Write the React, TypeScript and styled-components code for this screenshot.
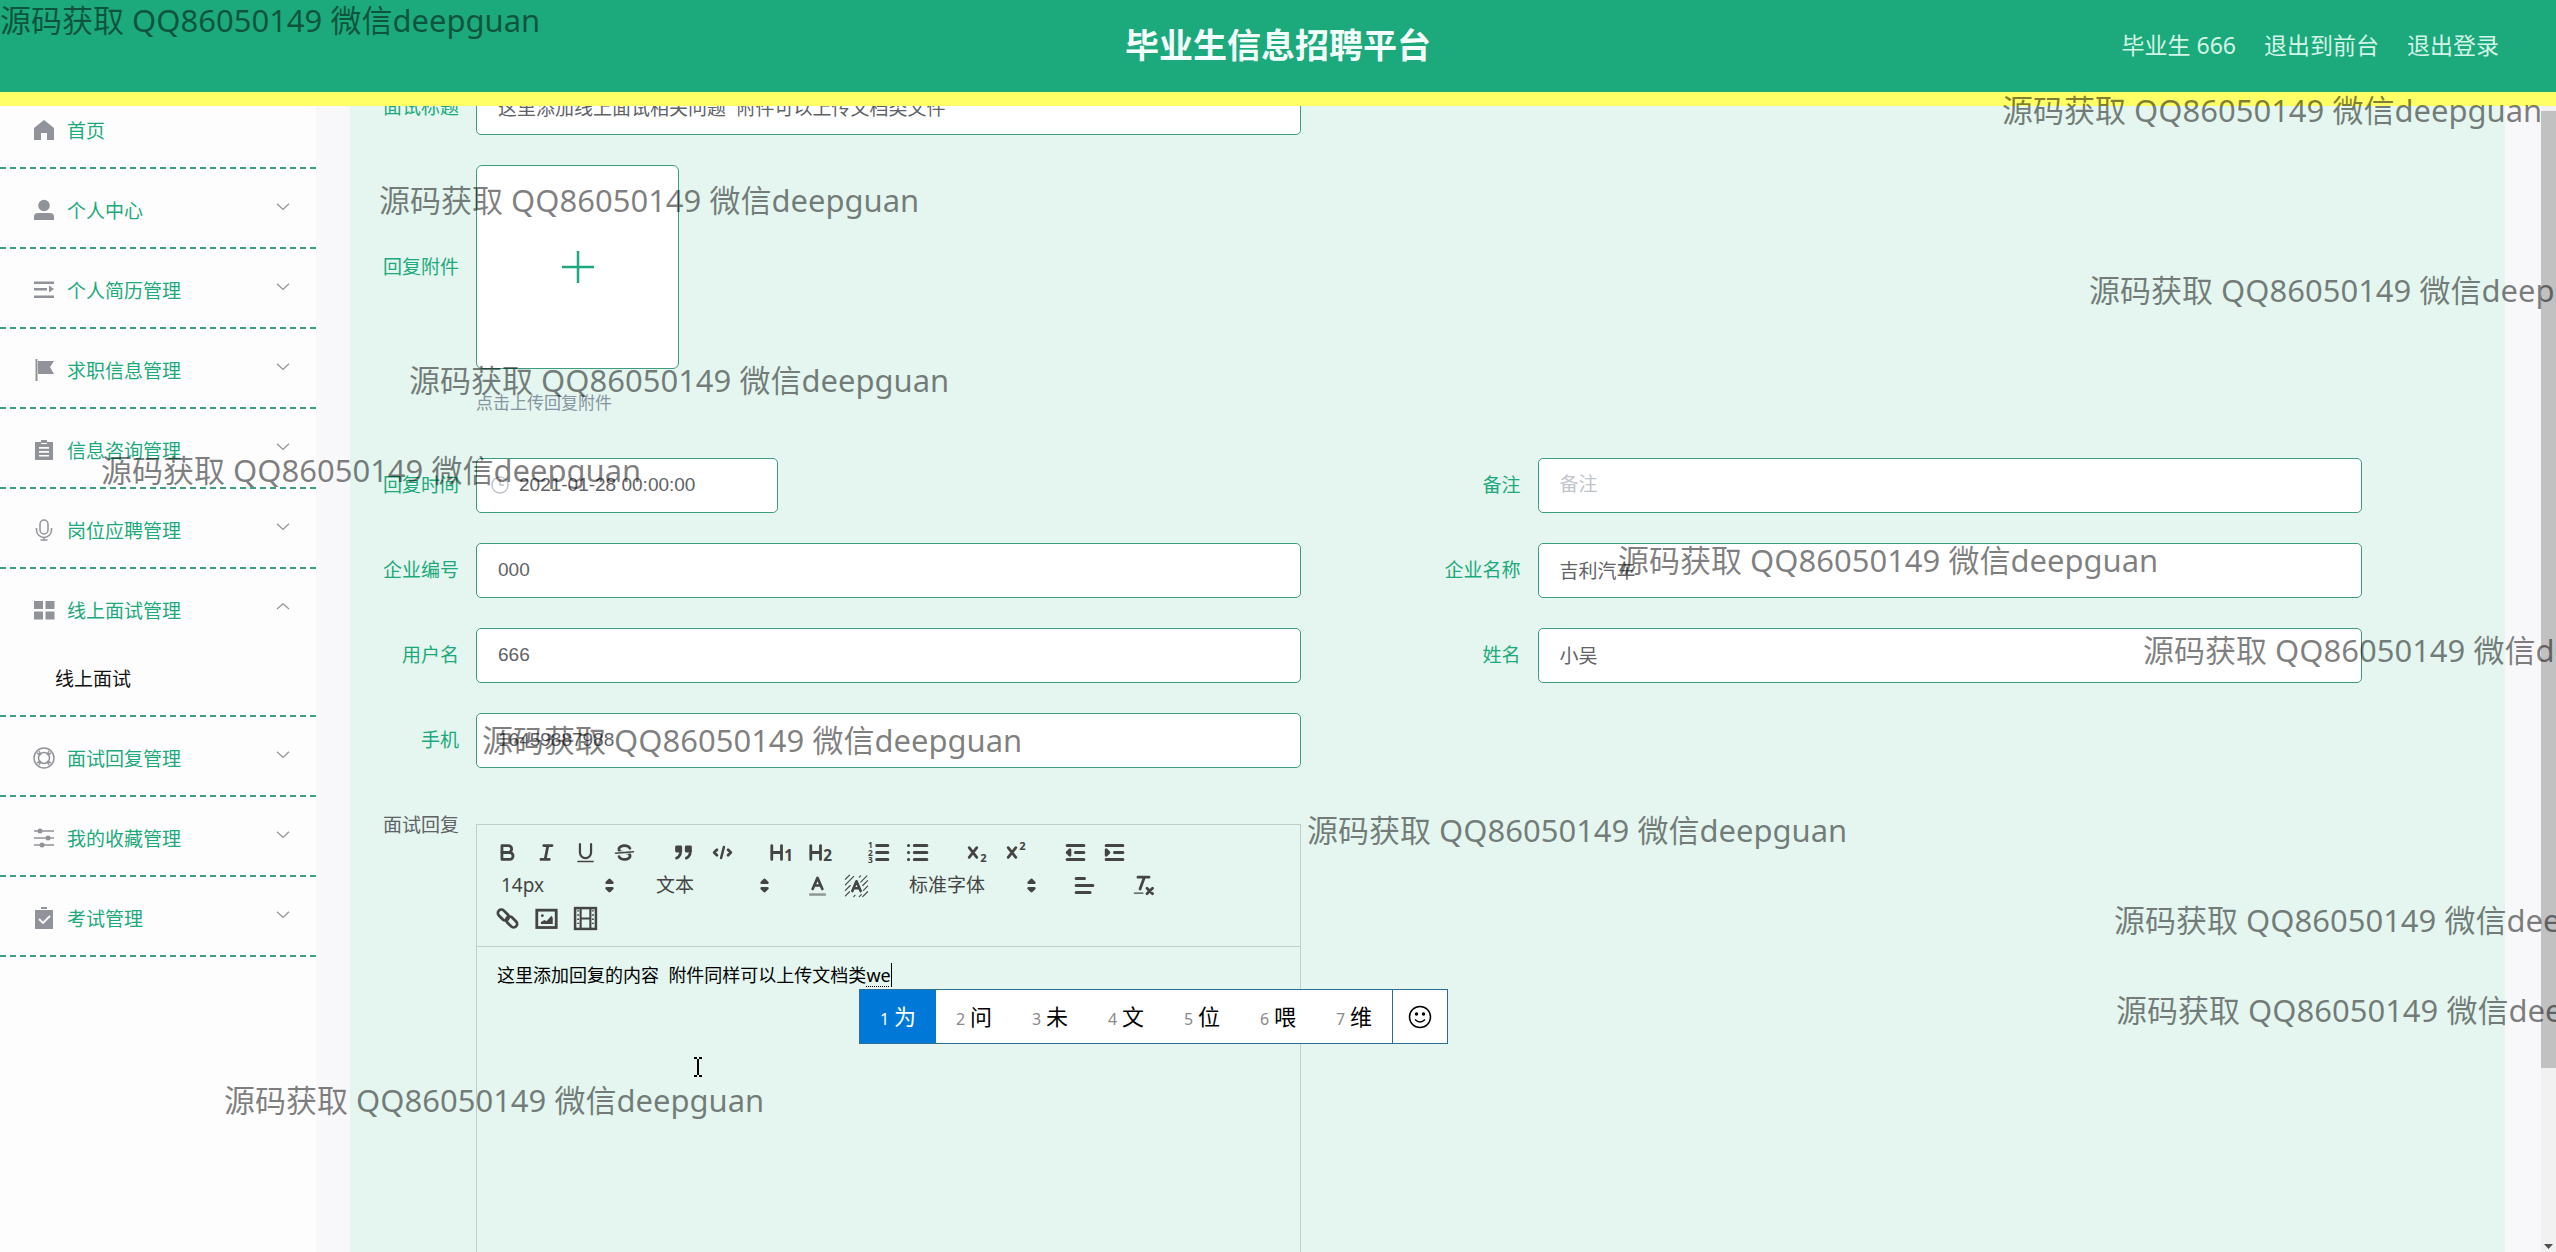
import React from "react";
import styled, { createGlobalStyle } from "styled-components";

const green = "#1ca97b";
const fieldBorder = "#3f9c7e";
const panelBg = "#e4f6ef";
const editorLine = "#bccfc8";

const Global = createGlobalStyle`
  *, *::before, *::after { box-sizing: border-box; }
  html, body, #root { height: 100%; }
  body {
    margin: 0;
    overflow: hidden;
    font-family: "Noto Sans", "Noto Sans CJK SC", sans-serif;
    font-size: 19px;
    background: #f8f8fb;
  }
  button, input, select { font: inherit; color: inherit; margin: 0; }
  ul { list-style: none; margin: 0; padding: 0; }
`;

const Page = styled.div`
  position: relative;
  height: 100vh;
  display: flex;
  flex-direction: column;
  overflow: hidden;
`;

const Header = styled.header`
  flex: none;
  height: 106px;
  display: grid;
  grid-template-columns: 1fr auto 1fr;
  align-items: center;
  padding-bottom: 3px;
  background: ${green};
  border-bottom: 14px solid #ffff66;
`;

const Title = styled.h1`
  grid-column: 2;
  margin: 0;
  font-size: 34px;
  line-height: 48px;
  font-weight: 700;
  color: #f4fffb;
`;

const HeaderNav = styled.nav`
  display: flex;
  justify-content: flex-end;
  gap: 28px;
  padding-right: 57px;
  font-size: 23px;
  line-height: 32px;
  color: #d3f5e8;
`;

const HeaderLink = styled.a`
  color: inherit;
  text-decoration: none;
`;

const Body = styled.div`
  flex: 1;
  min-height: 0;
  display: flex;
`;

const Sidebar = styled.aside`
  flex: none;
  width: 316px;
  overflow: hidden;
  background: #fdfdfd;
`;

const Menu = styled.ul`
  margin-top: -17px;
`;

const MenuItem = styled.li`
  border-bottom: 2px dashed #3d9f7e;
`;

const MenuButton = styled.button`
  width: 100%;
  height: 78px;
  display: flex;
  align-items: center;
  gap: 12px;
  padding: 3px 26px 0 33px;
  border: 0;
  background: none;
  color: ${green};
  text-align: left;
  svg { flex: none; color: #909399; }
`;

const MenuText = styled.span`
  flex: 1;
`;

const SubLink = styled.a`
  display: flex;
  align-items: center;
  height: 68px;
  padding: 0 0 6px 55px;
  color: #111;
  text-decoration: none;
`;

const Main = styled.main`
  flex: 1;
  min-width: 0;
  padding: 0 36px 0 34px;
  overflow: hidden;
`;

const Panel = styled.form`
  min-height: 100%;
  padding: 0 16px;
  background: ${panelBg};
`;

const FormGrid = styled.div`
  display: grid;
  grid-template-columns: 1fr 1fr;
  row-gap: 30px;
  margin-top: -26px;
`;

const Item = styled.div<{ $start?: boolean }>`
  display: flex;
  align-items: flex-start;
  padding-right: 127px;
  grid-column: ${(p) => (p.$start ? "1" : "auto")};
`;

const Label = styled.label<{ $tall?: boolean; $muted?: boolean }>`
  flex: none;
  width: 110px;
  padding-right: 17px;
  text-align: right;
  line-height: ${(p) => (p.$tall ? "204px" : "55px")};
  color: ${(p) => (p.$muted ? "#606266" : green)};
`;

const Control = styled.div`
  flex: 1;
  min-width: 0;
`;

const Input = styled.input`
  display: block;
  width: 100%;
  height: 55px;
  padding: 0 21px 2px;
  border: 1px solid ${fieldBorder};
  border-radius: 5px;
  background: #fff;
  color: #606266;
  font-family: "Liberation Sans", "Noto Sans CJK SC", sans-serif;
  outline: none;
  &::placeholder { color: #c0c4cc; }
`;

const DateBox = styled.div`
  display: flex;
  align-items: center;
  gap: 10px;
  width: 302px;
  height: 55px;
  padding: 0 14px 2px;
  border: 1px solid ${fieldBorder};
  border-radius: 5px;
  background: #fff;
  color: #c0c4cc;
`;

const DateInput = styled.input`
  flex: 1;
  min-width: 0;
  padding: 0;
  border: 0;
  background: none;
  color: #606266;
  font-family: "Liberation Sans", sans-serif;
  outline: none;
`;

const UploadButton = styled.button`
  display: flex;
  align-items: center;
  justify-content: center;
  width: 203px;
  height: 204px;
  border: 1px solid ${fieldBorder};
  border-radius: 6px;
  background: #fff;
  color: ${green};
`;

const Tip = styled.p`
  margin: 24px 0 15px;
  font-size: 17px;
  line-height: 20px;
  color: #8594a0;
`;

const Editor = styled.div`
  position: relative;
  margin-top: 26px;
  border: 1px solid ${editorLine};
`;

const Toolbar = styled.div`
  padding: 11px;
  border-bottom: 1px solid ${editorLine};
  color: #444;
`;

const ToolRow = styled.div`
  display: flex;
  gap: 20px;
  height: 33px;
`;

const ToolGroup = styled.div`
  display: flex;
`;

const Tool = styled.button`
  display: flex;
  align-items: center;
  justify-content: center;
  width: 39px;
  height: 33px;
  padding: 0;
  border: 0;
  background: none;
  svg { width: 25px; height: 25px; }
`;

const Picker = styled.span<{ $width: number }>`
  display: flex;
  align-items: center;
  width: ${(p) => p.$width}px;
  padding: 0 1px 0 13px;
  svg { flex: none; width: 25px; height: 25px; pointer-events: none; }
`;

const PickerSelect = styled.select`
  flex: 1;
  min-width: 0;
  padding: 0 0 2px;
  border: 0;
  appearance: none;
  background: none;
  line-height: 28px;
  outline: none;
`;

const Content = styled.div`
  min-height: 420px;
  padding: 14px 20px;
  font-size: 18px;
  line-height: 28px;
  color: #000;
  white-space: pre-wrap;
  outline: none;
`;

const Composing = styled.span`
  border-right: 1px solid #000;
  text-decoration: underline dotted 1px;
  text-underline-offset: 4px;
`;

const Candidates = styled.div`
  position: absolute;
  z-index: 2;
  left: 382px;
  top: 164px;
  display: flex;
  height: 55px;
  border: 1px solid #2b6f92;
  background: #fff;
`;

const Candidate = styled.button<{ $active?: boolean }>`
  display: flex;
  align-items: baseline;
  justify-content: center;
  gap: 5px;
  width: 76px;
  padding: 10px 0 0;
  border: 0;
  background: ${(p) => (p.$active ? "#0078d7" : "#fff")};
  color: ${(p) => (p.$active ? "#fff" : "#000")};
  font-size: 22px;
  line-height: 32px;
  small { font-size: 16px; color: ${(p) => (p.$active ? "#fff" : "#8a8a8a")}; }
`;

const EmojiButton = styled.button`
  display: flex;
  align-items: center;
  justify-content: center;
  width: 55px;
  border: 0;
  border-left: 1px solid #2b6f92;
  background: #fff;
  color: #000;
`;

const Pointer = styled.svg`
  position: absolute;
  left: 216px;
  top: 232px;
`;

const ScrollTrack = styled.div`
  flex: none;
  width: 15px;
  display: flex;
  flex-direction: column;
  justify-content: space-between;
  align-items: center;
  padding: 5px 0 2px;
  background: #f1f1f1;
`;

const ScrollThumb = styled.div`
  width: 100%;
  height: 84%;
  background: #c1c1c1;
`;

const MarkLayer = styled.div`
  position: absolute;
  inset: 0;
  z-index: 5;
  overflow: hidden;
  pointer-events: none;
`;

const Mark = styled.span`
  position: absolute;
  font-size: 31px;
  line-height: 40px;
  white-space: nowrap;
  color: rgba(0, 0, 0, 0.5);
`;

const marks = [
  [0, 0], [2002, 90], [379, 180], [2089, 270], [409, 360], [101, 450], [1618, 540],
  [2143, 630], [482, 720], [1307, 810], [2114, 900], [2116, 990], [224, 1080],
];

/* Sidebar icons, 22px box */
const SideIcon = ({ children }: { children: React.ReactNode }) => (
  <svg width="22" height="22" viewBox="0 0 22 22" fill="currentColor" aria-hidden="true">{children}</svg>
);

const sideIcons: Record<string, React.ReactNode> = {
  home: <path d="M11 1 21 9v12h-7v-7H8v7H1V9z" />,
  user: <><circle cx="11" cy="6.5" r="5.8" /><path d="M1 21v-3q0-4 4-4h12q4 0 4 4v3z" /></>,
  fold: <><path d="M1 2.500h20v2.500H1zM1 9h13v2.500H1zM1 16.500h20V19H1z" /><path d="M16 6.500 21 10l-5 3.500z" /></>,
  flag: <><path d="M2.500 0h2v22h-2z" /><path d="M5 2h16l-4 6 4 7H5z" /></>,
  order: <path fillRule="evenodd" d="M8 1h6v2h6v18H2V3h6zM6 8v1.700h10V8zm0 4v1.700h10V12zm0 4v1.500h10V16zM8 4v1h6V4z" />,
  mic: <g fill="none" stroke="currentColor" strokeWidth="1.500"><rect x="7" y="1" width="8" height="14" rx="4" /><path d="M3.500 9v2a7.500 7.500 0 0 0 15 0V9M11 18.500V21M7.500 21h7" /></g>,
  grid: <path d="M1 2h9v8H1zM12.500 2h9v8h-9zM1 12.500h9v8H1zM12.500 12.500h9v8h-9z" />,
  help: <g fill="none" stroke="currentColor" strokeWidth="1.500"><circle cx="11" cy="11" r="10" /><circle cx="11" cy="11" r="5.500" /><path d="m4 6 3.500 2M6 4l2 3.500M18 6l-3.500 2M16 4l-2 3.500M4 16l3.500-2M6 18l2-3.500M18 16l-3.500-2M16 18l-2-3.500" /></g>,
  sliders: <><path d="M1 3.200h20v1.600H1zM1 10.200h20v1.600H1zM1 17.200h20v1.600H1z" /><circle cx="7" cy="4" r="2.500" /><circle cx="15" cy="11" r="2.500" /><circle cx="9" cy="18" r="2.500" /></>,
  check: <><path d="M8 0h6v2H8zM2 3h18v19H2z" /><path d="m6 12 4 4 7-7" fill="none" stroke="#fff" strokeWidth="1.800" /></>,
};

const Chevron = ({ up }: { up?: boolean }) => (
  <svg width="14" height="14" viewBox="0 0 14 14" fill="none" stroke="currentColor" strokeWidth="1.200" aria-hidden="true">
    {up ? <path d="M1 6 7 0.800 13 6" /> : <path d="M1 0.800 7 6.500 13 0.800" />}
  </svg>
);

const menu = [
  { icon: "home", text: "首页" },
  { icon: "user", text: "个人中心", arrow: true },
  { icon: "fold", text: "个人简历管理", arrow: true },
  { icon: "flag", text: "求职信息管理", arrow: true },
  { icon: "order", text: "信息咨询管理", arrow: true },
  { icon: "mic", text: "岗位应聘管理", arrow: true },
  { icon: "grid", text: "线上面试管理", arrow: true, child: "线上面试" },
  { icon: "help", text: "面试回复管理", arrow: true },
  { icon: "sliders", text: "我的收藏管理", arrow: true },
  { icon: "check", text: "考试管理", arrow: true },
];

/* Editor toolbar icons, 18-unit box */
const ToolIcon = ({ children }: { children: React.ReactNode }) => (
  <svg viewBox="0 0 18 18" fill="none" stroke="currentColor" strokeWidth="2" strokeLinecap="round" strokeLinejoin="round" aria-hidden="true">
    {children}
  </svg>
);
const glyph = { fill: "currentColor", stroke: "none", fontFamily: "Open Sans, sans-serif", fontWeight: 700 };

const tools: Record<string, React.ReactNode> = {
  bold: <><path d="M5,4H9.500A2.500,2.500,0,0,1,12,6.500v0A2.500,2.500,0,0,1,9.500,9H5V4Z" /><path d="M5,9h5.500A2.500,2.500,0,0,1,13,11.500v0A2.500,2.500,0,0,1,10.500,14H5V9Z" /></>,
  italic: <path d="M7 4h6M5 14h6M8 14l2-10" />,
  underline: <><path d="M5,3V9a4,4,0,0,0,8,0V3" strokeWidth="1.600" /><path d="M3.500 15.500h11" strokeWidth="1" /></>,
  strike: <><path d="M15.500 8.500l-13 1" strokeWidth="1" /><g fill="currentColor" stroke="none"><path d="M9.007,8C6.542,7.791,6,7.519,6,6.500,6,5.792,7.283,5,9,5c1.571,0,2.765.679,2.969,1.309a1,1,0,0,0,1.900-.617C13.356,4.106,11.354,3,9,3,6.200,3,4,4.538,4,6.500a3.200,3.200,0,0,0,.5,1.843Z" /><path d="M8.984,10C11.457,10.208,12,10.479,12,11.500c0,0.708-1.283,1.500-3,1.500-1.571,0-2.765-.679-2.969-1.309a1,1,0,1,0-1.900.617C4.644,13.894,6.646,15,9,15c2.800,0,5-1.538,5-3.500a3.200,3.200,0,0,0-.5-1.843Z" /></g></>,
  quote: <g fill="currentColor"><rect x="4" y="5" width="3" height="3" /><rect x="11" y="5" width="3" height="3" /><path d="M7,8c0,4.031-3,5-3,5" /><path d="M14,8c0,4.031-3,5-3,5" /></g>,
  code: <><path d="M5 7 3 9l2 2M13 7l2 2-2 2" /><path d="M10 5 8 13" strokeWidth="1.800" /></>,
  h1: <><path d="M2 4v10M9 4v10M2 9h7" /><text x="11" y="15" fontSize="11" {...glyph}>1</text></>,
  h2: <><path d="M2 4v10M9 4v10M2 9h7" /><text x="11" y="15" fontSize="11" {...glyph}>2</text></>,
  ol: <><path d="M7 4h8M7 9h8M7 14h8" strokeWidth="2.200" /><text x="0.800" y="6" fontSize="6" {...glyph}>1</text><text x="0.800" y="11.200" fontSize="6" {...glyph}>2</text><text x="0.800" y="16.400" fontSize="6" {...glyph}>3</text></>,
  ul: <path d="M6 4h9M6 9h9M6 14h9M1.800 4h.1M1.800 9h.1M1.800 14h.1" strokeWidth="2.200" />,
  sub: <><path d="M3 5.500l5.500 7M8.500 5.500l-5.500 7" /><text x="11" y="16" fontSize="8" {...glyph}>2</text></>,
  sup: <><path d="M3 5.500l5.500 7M8.500 5.500l-5.500 7" /><text x="11" y="7.500" fontSize="8" {...glyph}>2</text></>,
  outdent: <><path d="M3 14h12M3 4h12M9 9h6" strokeWidth="2.200" /><path d="M5 7v4L3 9z" fill="currentColor" /></>,
  indent: <><path d="M3 14h12M3 4h12M9 9h6" strokeWidth="2.200" /><path d="M3 7v4l2-2z" fill="currentColor" /></>,
  color: <><path d="M3 15.500h12" strokeWidth="1.800" stroke="#8d9692" strokeLinecap="butt" /><path d="M5.500 11.500 9 3.500l3.500 8M6.600 9h4.800" strokeWidth="1.900" /></>,
  background: <><path d="M1 4.500 4 1.500M1 8.500 7 2.500M1 12.500 4.500 9M1 16.500l3-3M7 17l1-1M11 17l1.500-1.500M12 2l-1 1M16.500 2 12 6.500M17 5.500l-3.500 3.500M17 9.500l-3 3M17 13.500l-3.500 3.500" strokeWidth="0.800" /><path d="M6 13 9 6l3 7M7 11h4" strokeWidth="1.900" /></>,
  align: <path d="M3 9h12M3 14h10M3 4h6" strokeWidth="2.200" />,
  clean: <><path d="M5 3h8M6.500 11.500 9.500 3.500" /><path d="M11.500 11l4 4M15.500 11l-4 4" /><path d="M2.500 14.500h6" strokeWidth="1" /></>,
  link: <><rect x="1.500" y="4" width="9" height="5" rx="2.500" transform="rotate(45 6 6.500)" /><rect x="7.500" y="9" width="9" height="5" rx="2.500" transform="rotate(45 12 11.500)" /></>,
  image: <><rect x="2" y="3" width="14" height="12.500" strokeLinejoin="miter" /><circle cx="6" cy="7" r="1" fill="currentColor" stroke="none" /><path d="M5 13V11.500l2.500-1.500L9 11l3.500-4L13.500 8.500V13z" fill="currentColor" stroke="none" /></>,
  video: <><rect x="1.500" y="1.500" width="15" height="15" strokeWidth="1.800" strokeLinejoin="miter" /><path d="M5.500 2v14M12.500 2v14M6 9h6" strokeWidth="1.500" /><path d="M3.700 3v12M14.300 3v12" strokeWidth="1.400" strokeDasharray="1 2" strokeLinecap="butt" /></>,
};

const Btn = ({ name }: { name: string }) => (
  <Tool type="button" aria-label={name}><ToolIcon>{tools[name]}</ToolIcon></Tool>
);

const rowOne = [
  ["bold", "italic", "underline", "strike"], ["quote", "code"], ["h1", "h2"], ["ol", "ul"], ["sub", "sup"], ["outdent", "indent"],
];

const PickerBox = ({ label, value, width }: { label: string; value: string; width: number }) => (
  <Picker $width={width}>
    <PickerSelect aria-label={label} defaultValue={value}><option>{value}</option></PickerSelect>
    <svg viewBox="0 0 18 18" fill="currentColor" stroke="currentColor" strokeWidth="2" strokeLinejoin="round" aria-hidden="true">
      <path d="M7 11l2 2 2-2zM7 7l2-2 2 2z" />
    </svg>
  </Picker>
);

const TextField = ({ id, label, value, placeholder, start }: { id: string; label: string; value?: string; placeholder?: string; start?: boolean }) => (
  <Item $start={start}>
    <Label htmlFor={id}>{label}</Label>
    <Control><Input id={id} defaultValue={value} placeholder={placeholder} /></Control>
  </Item>
);

const words = ["为", "问", "未", "文", "位", "喂", "维"];

export default function App() {
  return (
    <>
      <Global />
      <Page>
        <Header>
          <Title>毕业生信息招聘平台</Title>
          <HeaderNav>
            <span>毕业生 666</span>
            <HeaderLink href="#front">退出到前台</HeaderLink>
            <HeaderLink href="#logout">退出登录</HeaderLink>
          </HeaderNav>
        </Header>
        <Body>
          <Sidebar>
            <Menu>
              {menu.map((m) => (
                <MenuItem key={m.text}>
                  <MenuButton type="button">
                    <SideIcon>{sideIcons[m.icon]}</SideIcon>
                    <MenuText>{m.text}</MenuText>
                    {m.arrow && <Chevron up={!!m.child} />}
                  </MenuButton>
                  {m.child && <SubLink href="#interview">{m.child}</SubLink>}
                </MenuItem>
              ))}
            </Menu>
          </Sidebar>
          <Main>
            <Panel onSubmit={(e) => e.preventDefault()}>
              <FormGrid>
                <TextField id="title" label="面试标题" value="这里添加线上面试相关问题  附件可以上传文档类文件" />
                <Item $start>
                  <Label htmlFor="file" $tall>回复附件</Label>
                  <Control>
                    <UploadButton id="file" type="button" aria-label="上传">
                      <svg width="32" height="32" viewBox="0 0 32 32" stroke="currentColor" strokeWidth="2.500" aria-hidden="true"><path d="M0 16h32M16 0v32" /></svg>
                    </UploadButton>
                    <Tip>点击上传回复附件</Tip>
                  </Control>
                </Item>
                <Item $start>
                  <Label htmlFor="time">回复时间</Label>
                  <Control>
                    <DateBox>
                      <svg width="18" height="18" viewBox="0 0 18 18" fill="none" stroke="currentColor" strokeWidth="1.500" aria-hidden="true"><circle cx="9" cy="9" r="8" /><path d="M9 4v5h4" /></svg>
                      <DateInput id="time" defaultValue="2021-01-28 00:00:00" />
                    </DateBox>
                  </Control>
                </Item>
                <TextField id="note" label="备注" placeholder="备注" />
                <TextField id="code" label="企业编号" value="000" />
                <TextField id="company" label="企业名称" value="吉利汽车" />
                <TextField id="account" label="用户名" value="666" />
                <TextField id="name" label="姓名" value="小吴" />
                <TextField id="phone" label="手机" value="16459887988" start />
                <Item $start>
                  <Label as="span" id="reply-label" $muted>面试回复</Label>
                  <Control>
                    <Editor>
                      <Toolbar>
                        <ToolRow>
                          {rowOne.map((g) => (
                            <ToolGroup key={g[0]}>{g.map((n) => <Btn key={n} name={n} />)}</ToolGroup>
                          ))}
                        </ToolRow>
                        <ToolRow>
                          <PickerBox label="字号" value="14px" width={135} />
                          <PickerBox label="段落" value="文本" width={135} />
                          <ToolGroup><Btn name="color" /><Btn name="background" /></ToolGroup>
                          <PickerBox label="字体" value="标准字体" width={149} />
                          <ToolGroup><Btn name="align" /></ToolGroup>
                          <ToolGroup><Btn name="clean" /></ToolGroup>
                        </ToolRow>
                        <ToolRow>
                          <ToolGroup><Btn name="link" /><Btn name="image" /><Btn name="video" /></ToolGroup>
                        </ToolRow>
                      </Toolbar>
                      <Content contentEditable suppressContentEditableWarning role="textbox" aria-labelledby="reply-label" spellCheck={false}>
                        这里添加回复的内容{"  "}附件同样可以上传文档类<Composing>we</Composing>
                      </Content>
                      <Pointer width="10" height="20" viewBox="0 0 10 20" fill="none" stroke="#000" strokeWidth="2" aria-hidden="true">
                        <path d="M1 1h3M6 1h3M5 2v16M1 19h3M6 19h3" />
                      </Pointer>
                      <Candidates>
                        {words.map((w, i) => (
                          <Candidate key={w} type="button" $active={i === 0}><small>{i + 1}</small>{w}</Candidate>
                        ))}
                        <EmojiButton type="button" aria-label="表情">
                          <svg width="24" height="24" viewBox="0 0 24 24" fill="none" stroke="currentColor" strokeWidth="1.500" aria-hidden="true">
                            <circle cx="12" cy="12" r="10.500" /><path d="M7 14.500q5 5 10 0" /><circle cx="8.500" cy="9" r="1" fill="currentColor" /><circle cx="15.500" cy="9" r="1" fill="currentColor" />
                          </svg>
                        </EmojiButton>
                      </Candidates>
                    </Editor>
                  </Control>
                </Item>
              </FormGrid>
            </Panel>
          </Main>
          <ScrollTrack aria-hidden="true">
            <ScrollThumb />
            <svg width="9" height="6" viewBox="0 0 9 6" fill="#505050"><path d="M0 0h9L4.500 5z" /></svg>
          </ScrollTrack>
        </Body>
        <MarkLayer aria-hidden="true">
          {marks.map(([x, y]) => (
            <Mark key={`${x}-${y}`} style={{ left: x, top: y }}>源码获取 QQ86050149 微信deepguan</Mark>
          ))}
        </MarkLayer>
      </Page>
    </>
  );
}
